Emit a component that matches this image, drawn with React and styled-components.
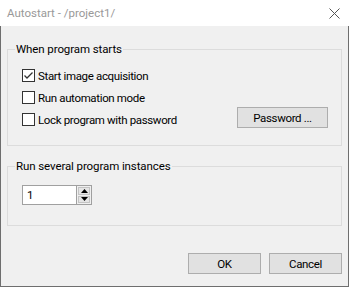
import React from 'react'
import styled, { createGlobalStyle } from 'styled-components'

const GlobalStyle = createGlobalStyle`
  html, body {
    margin: 0;
    padding: 0;
    background: #f0f0f0;
  }
  body {
    font-family: Roboto, "Liberation Sans", sans-serif;
    font-size: 11.5px;
    letter-spacing: -0.35px;
    color: #000;
  }
`

const Window = styled.div`
  box-sizing: border-box;
  width: 349px;
  height: 287px;
  display: flex;
  flex-direction: column;
  background: #f0f0f0;
  border: 1px solid #6e6e6e;
  border-top: none;
`

const TitleBar = styled.div`
  height: 26px;
  flex: none;
  display: flex;
  align-items: center;
  justify-content: space-between;
  background: #fff;
  padding: 0 9px 0 7px;
  margin: 0 -1px;
`

const Title = styled.span`
  color: #999;
  letter-spacing: 0;
`

const CloseIcon = () => (
  <svg width="11" height="11" viewBox="0 0 11 11">
    <path d="M0.5 0.5 L10.5 10.5 M10.5 0.5 L0.5 10.5" stroke="#555" strokeWidth="1" />
  </svg>
)

const Body = styled.div`
  flex: 1;
  display: flex;
  flex-direction: column;
  padding: 16px 6px 12px 6px;
`

const Group = styled.fieldset`
  margin: ${props => props.$top || 0}px 0 0 0;
  padding: ${props => props.$pt}px 13px ${props => props.$pb}px 14px;
  border: 1px solid #dcdcdc;
  min-width: 0;
`

const Legend = styled.legend`
  margin-left: -7px;
  padding: 0 1px;
  line-height: 14px;
  letter-spacing: -0.1px;
`

const Rows = styled.div`
  display: flex;
  flex-direction: column;
  gap: 1px;
`

const Row = styled.label`
  display: flex;
  align-items: center;
  height: 21px;
  gap: 3px;
`

const Box = styled.span`
  box-sizing: border-box;
  width: 13px;
  height: 13px;
  flex: none;
  border: 1px solid #333;
  background: #fff;
  display: flex;
  align-items: center;
  justify-content: center;
`

const Check = () => (
  <svg width="11" height="11" viewBox="0 0 11 11">
    <path d="M1.5 5.5 L4 8 L9.5 2.5" fill="none" stroke="#333" strokeWidth="1.3" />
  </svg>
)

const CheckBox = ({ checked, children }) => (
  <>
    <Box>{checked && <Check />}</Box>
    <span>{children}</span>
  </>
)

const Button = styled.button`
  box-sizing: border-box;
  width: ${props => props.$w || 73}px;
  height: 21px;
  padding: 0;
  font-family: inherit;
  font-size: inherit;
  letter-spacing: inherit;
  color: #000;
  background: #e1e1e1;
  border: 1px solid #adadad;
`

const SideButton = styled(Button)`
  margin-left: auto;
  align-self: flex-start;
  margin-top: -2px;
`

const Spinner = styled.div`
  display: flex;
  width: 70px;
  height: 20px;
  box-sizing: border-box;
  border: 1px solid #a0a0a0;
  background: #fff;
`

const SpinValue = styled.div`
  flex: 1;
  display: flex;
  align-items: center;
  padding-left: 4px;
`

const SpinButtons = styled.div`
  width: 15px;
  display: flex;
  flex-direction: column;
  gap: 1px;
  padding: 1px;
  box-sizing: border-box;
  border-left: 1px solid #a0a0a0;
  background: #f0f0f0;
`

const SpinButton = styled.div`
  flex: 1;
  display: flex;
  align-items: center;
  justify-content: center;
  background: #e5e5e5;
  border: 1px solid #c4c4c4;
`

const Arrow = ({ down }) => (
  <svg width="7" height="4" viewBox="0 0 7 4">
    <path d={down ? 'M0 0 H7 L3.5 4 Z' : 'M0 4 H7 L3.5 0 Z'} fill="#000" />
  </svg>
)

const Footer = styled.div`
  margin-top: auto;
  display: flex;
  justify-content: flex-end;
  gap: 8px;
`

export default function App() {
  return (
    <>
      <GlobalStyle />
      <Window>
        <TitleBar>
          <Title>Autostart - /project1/</Title>
          <CloseIcon />
        </TitleBar>
        <Body>
          <Group $pt={9} $pb={15}>
            <Legend>When program starts</Legend>
            <Rows>
              <Row>
                <CheckBox checked>Start image acquisition</CheckBox>
              </Row>
              <Row>
                <CheckBox>Run automation mode</CheckBox>
              </Row>
              <Row>
                <CheckBox>Lock program with password</CheckBox>
                <SideButton $w={91}>Password ...</SideButton>
              </Row>
            </Rows>
          </Group>
          <Group $top={13} $pt={12} $pb={20}>
            <Legend>Run several program instances</Legend>
            <Spinner>
              <SpinValue>1</SpinValue>
              <SpinButtons>
                <SpinButton><Arrow /></SpinButton>
                <SpinButton><Arrow down /></SpinButton>
              </SpinButtons>
            </Spinner>
          </Group>
          <Footer>
            <Button>OK</Button>
            <Button>Cancel</Button>
          </Footer>
        </Body>
      </Window>
    </>
  )
}
